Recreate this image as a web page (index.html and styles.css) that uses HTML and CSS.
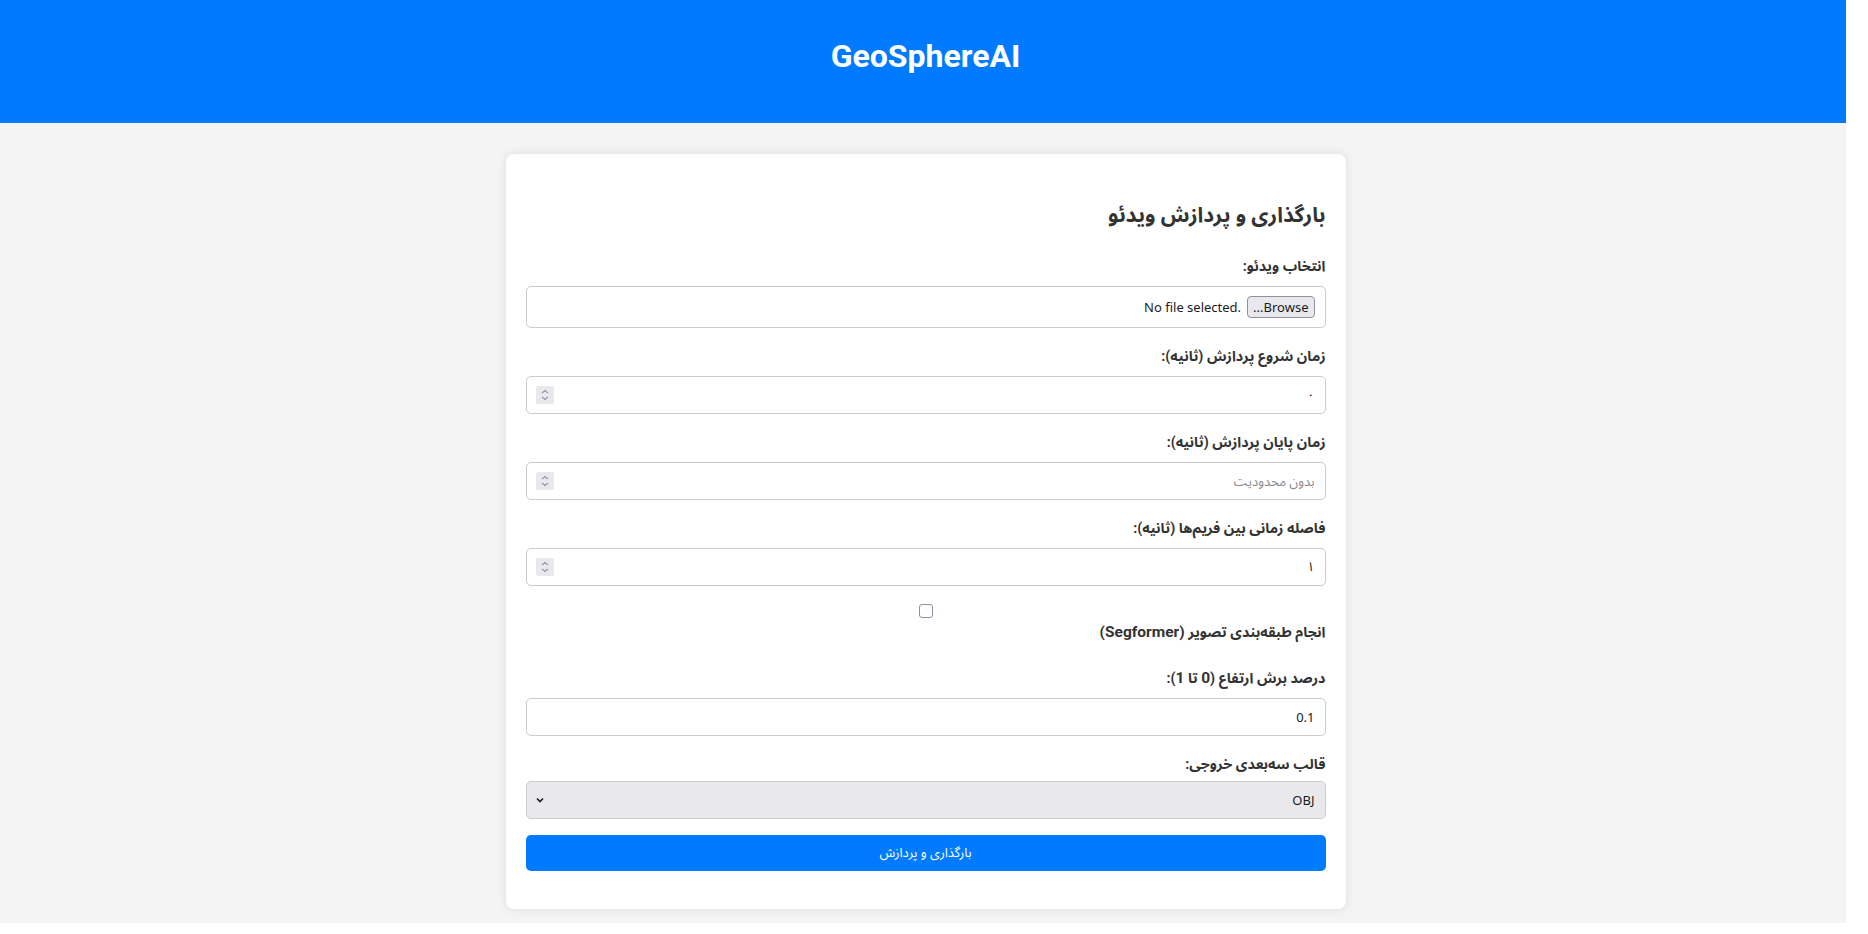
FILE: index.html
```html
<!DOCTYPE html>
<html lang="fa" dir="rtl">
<head>
<meta charset="utf-8">
<title>GeoSphereAI</title>
<link rel="stylesheet" href="styles.css">
</head>
<body>
<header class="site-header">
  <h1 class="site-title">GeoSphereAI</h1>
</header>
<main class="page">
  <section class="card">
    <h2 class="card-title">بارگذاری و پردازش ویدئو</h2>
    <form class="form">
      <div class="group">
        <label class="label">انتخاب ویدئو:</label>
        <div class="field file-field">
          <button type="button" class="file-btn">Browse...</button>
          <span class="file-status">No file selected.</span>
        </div>
      </div>
      <div class="group">
        <label class="label">زمان شروع پردازش (ثانیه):</label>
        <div class="field num-field">
          <input class="inner-input" type="text" value="٠">
          <span class="spin"><svg width="18" height="18" viewBox="0 0 18 18"><path d="M6 7.2 L9 4.6 L12 7.2 M6 10.8 L9 13.4 L12 10.8" fill="none" stroke="#8f8f9d" stroke-width="1.1"/></svg></span>
        </div>
      </div>
      <div class="group">
        <label class="label">زمان پایان پردازش (ثانیه):</label>
        <div class="field num-field">
          <input class="inner-input" type="text" placeholder="بدون محدودیت">
          <span class="spin"><svg width="18" height="18" viewBox="0 0 18 18"><path d="M6 7.2 L9 4.6 L12 7.2 M6 10.8 L9 13.4 L12 10.8" fill="none" stroke="#8f8f9d" stroke-width="1.1"/></svg></span>
        </div>
      </div>
      <div class="group">
        <label class="label">فاصله زمانی بین فریم‌ها (ثانیه):</label>
        <div class="field num-field">
          <input class="inner-input" type="text" value="١">
          <span class="spin"><svg width="18" height="18" viewBox="0 0 18 18"><path d="M6 7.2 L9 4.6 L12 7.2 M6 10.8 L9 13.4 L12 10.8" fill="none" stroke="#8f8f9d" stroke-width="1.1"/></svg></span>
        </div>
      </div>
      <div class="group">
        <input class="check" type="checkbox" id="seg">
        <label class="label label-check" for="seg">انجام طبقه‌بندی تصویر <span class="latin">(Segformer)</span></label>
      </div>
      <div class="group">
        <label class="label">درصد برش ارتفاع (<span class="latin">0</span> تا <span class="latin">1</span>):</label>
        <div class="field text-field">
          <input class="inner-input" type="text" value="0.1">
        </div>
      </div>
      <div class="group">
        <label class="label label-tight">قالب سه‌بعدی خروجی:</label>
        <div class="field select-field">
          <select class="inner-select">
            <option>OBJ</option>
            <option>PLY</option>
            <option>GLB</option>
          </select>
          <svg class="chev" width="10" height="10" viewBox="0 0 10 10"><path d="M2 3.5 L5 6.5 L8 3.5" fill="none" stroke="#1b1b1b" stroke-width="1.6"/></svg>
        </div>
      </div>
      <button type="button" class="submit">بارگذاری و پردازش</button>
    </form>
  </section>
</main>
</body>
</html>
```

FILE: styles.css
```css
* {
  box-sizing: border-box;
}

html {
  background: #ffffff;
}

body {
  margin: 0 22px 0 0;
  font-family: Roboto, "Noto Sans Arabic", "DejaVu Sans", sans-serif;
  color: #333333;
}

.site-header {
  background: #007bff;
  color: #ffffff;
  height: 123px;
  padding-top: 38px;
  padding-left: 5px;
  text-align: center;
}

.site-title {
  margin: 0;
  font-family: Roboto, sans-serif;
  font-size: 32px;
  font-weight: 700;
  line-height: 37.5px;
}

.page {
  background: #f4f4f4;
  padding: 31px 0 14px 5px;
}

.card {
  width: 840px;
  margin: 0 auto;
  background: #ffffff;
  border-radius: 8px;
  box-shadow: 0 0 10px rgba(0, 0, 0, 0.1);
  padding: 20px 20px 38px;
}

.card-title {
  margin: 25px 0 24px;
  font-size: 21px;
  font-weight: 700;
  line-height: 32px;
  color: #333333;
}

.form {
  display: flex;
  flex-direction: column;
}

.group {
  display: flex;
  flex-direction: column;
  margin-bottom: 17px;
}

.label {
  display: block;
  font-size: 14.3px;
  font-weight: 700;
  line-height: 22px;
  margin-bottom: 9px;
  color: #333333;
}

.latin {
  font-size: 15.5px;
}

.label-check {
  margin-bottom: 7px;
}

.label-tight {
  margin-bottom: 6px;
}

.field {
  display: flex;
  align-items: center;
  width: 100%;
  height: 38px;
  border: 1px solid #cccccc;
  border-radius: 5px;
  background: #ffffff;
  padding: 0 10px;
  font-family: "Noto Sans", "Noto Sans Arabic", "DejaVu Sans", sans-serif;
  font-size: 13px;
  color: #1b1b1b;
}

.file-field {
  height: 42px;
  gap: 6px;
}

.file-btn {
  height: 22px;
  padding: 0 5px;
  border: 1px solid #8f8f9d;
  border-radius: 4px;
  background: #e9e9ed;
  font-family: "Noto Sans", sans-serif;
  font-size: 13px;
  color: #1b1b1b;
}

.file-status {
  direction: ltr;
  unicode-bidi: isolate;
  font-size: 13px;
}

.inner-input {
  flex: 1;
  min-width: 0;
  border: none;
  outline: none;
  padding: 0;
  background: transparent;
  font-family: "Noto Sans", "Noto Sans Arabic", "DejaVu Sans", sans-serif;
  font-size: 13px;
  color: #1b1b1b;
  text-align: right;
}

.inner-input::placeholder {
  color: #8a8a8a;
}

.num-field {
  padding-left: 9px;
}

.spin {
  display: flex;
  width: 18px;
  height: 18px;
  background: #e9e9ed;
  border-radius: 2px;
}

.check {
  appearance: none;
  display: block;
  width: 14px;
  height: 14px;
  margin: 1px auto 3px;
  border: 1.5px solid #8f8f9d;
  border-radius: 3px;
  background: #ffffff;
}

.select-field {
  background: #e9e9ed;
  padding-left: 8px;
}

.inner-select {
  flex: 1;
  appearance: none;
  border: none;
  outline: none;
  background: transparent;
  padding: 0;
  font-family: "Noto Sans", sans-serif;
  font-size: 13px;
  color: #1b1b1b;
}

.chev {
  flex: none;
}

.submit {
  height: 36px;
  margin-top: -1px;
  border: none;
  border-radius: 5px;
  background: #007bff;
  color: #ffffff;
  font-family: "Noto Sans Arabic", "DejaVu Sans", sans-serif;
  font-size: 13px;
}
```
